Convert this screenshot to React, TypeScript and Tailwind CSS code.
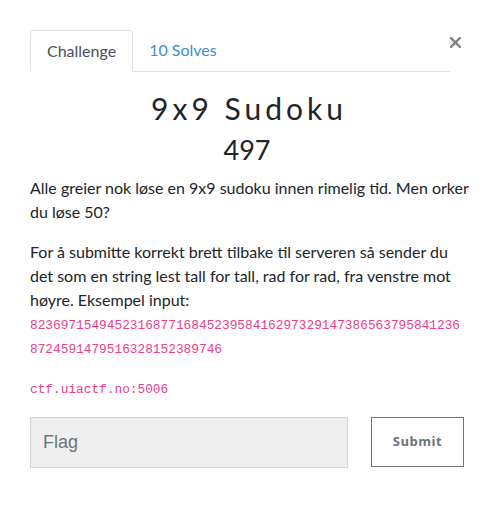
import React from "react";

export default function App() {
  const lato = { fontFamily: "Lato, 'Open Sans', sans-serif" } as React.CSSProperties;
  return (
    <div className="w-[492px] h-[512px] bg-white pt-[30px] pl-[30px] pr-[28px]" style={lato}>
      <div className="flex items-start">
        <div className="flex w-[420px] border-b border-[#dee2e6]">
          <div className="-mb-px rounded-t border border-[#dee2e6] border-b-white bg-white px-4 py-2 text-[16px] leading-[24px] text-[#495057]">
            Challenge
          </div>
          <div className="px-4 py-2 text-[16px] leading-[24px] text-[#3a8ed5]">10 Solves</div>
        </div>
        <div className="flex flex-1 justify-end pt-[7px] pr-[3px]">
          <svg width="11" height="11" viewBox="0 0 11 11">
            <path d="M1 1 L10 10 M10 1 L1 10" stroke="#7f7f7f" strokeWidth="2.4" strokeLinecap="square" />
          </svg>
        </div>
      </div>

      <div className="mt-[19px] pl-[4px] text-center text-[30px] leading-[34px] tracking-[4px] text-[#212529]">
        9x9 Sudoku
      </div>
      <div className="mt-[8px] text-center text-[27px] leading-[34px] text-[#212529]">497</div>

      <p className="mt-[9px] w-[440px] text-[16px] leading-[24px] text-[#212529]">
        Alle greier nok løse en 9x9 sudoku innen rimelig tid. Men orker du løse 50?
      </p>
      <p className="mt-[16px] text-[16px] leading-[24px] text-[#212529]">
        For å submitte korrekt brett tilbake til serveren så sender du det som en string lest tall for tall, rad for
        rad, fra venstre mot høyre. Eksempel input:
      </p>
      <div
        className="mt-[2px] w-[432px] break-all text-[12.8px] leading-[24px] text-[#e83e8c]"
        style={{ fontFamily: "'Liberation Mono', monospace" }}
      >
        823697154945231687716845239584162973291473865637958412368724591479516328152389746
      </div>
      <div
        className="mt-[16px] text-[12.8px] leading-[24px] text-[#e83e8c]"
        style={{ fontFamily: "'Liberation Mono', monospace" }}
      >
        ctf.uiactf.no:5006
      </div>

      <div className="mt-[15px] flex items-start gap-[23px]">
        <input
          placeholder="Flag"
          className="h-[51px] w-[318px] border border-[#ced4da] bg-[#efefef] px-[12px] text-[18px] text-[#495057] placeholder:text-[#6c757d] outline-none"
          style={{ fontFamily: "'Liberation Sans', Arial, sans-serif" }}
        />
        <button
          className="h-[50px] w-[93px] border border-[#6c757d] bg-white text-[13px] font-bold tracking-[0.5px] text-[#6c757d]"
          style={{ fontFamily: "'Open Sans', sans-serif" }}
        >
          Submit
        </button>
      </div>
    </div>
  );
}
